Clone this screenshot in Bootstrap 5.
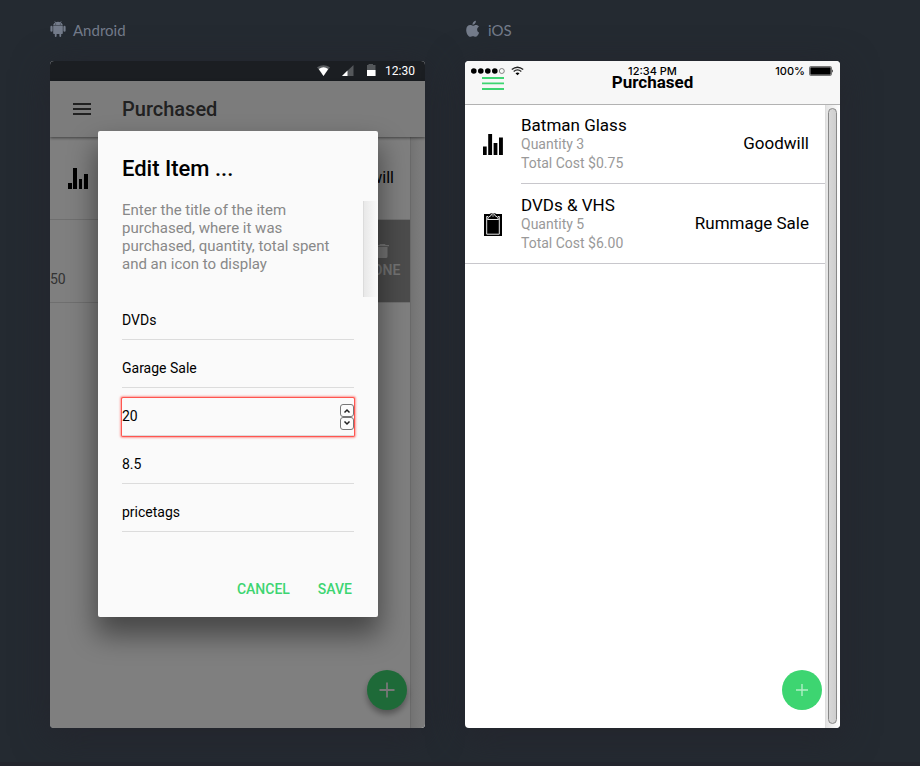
<!DOCTYPE html>
<html lang="en">
<head>
<meta charset="utf-8">
<meta name="viewport" content="width=device-width, initial-scale=1">
<title>Purchased</title>
<link href="https://cdn.jsdelivr.net/npm/bootstrap@5.3.0/dist/css/bootstrap.min.css" rel="stylesheet">
<style>
  body { background: #242a31; font-family: Roboto, "Liberation Sans", sans-serif; color: #000; border-bottom: 4px solid #23252d; }
  .stage { display: grid; grid-template-columns: 1fr 1fr; column-gap: 40px; padding: 20px 80px 34px 50px; }
  .platform { height: 21px; margin-bottom: 20px; gap: 7px; color: #747c8b; font: 15px/21px Lato, sans-serif; }
  .platform svg { display: block; margin-top: -4px; }
  .phone { min-height: calc(100vh - 99px); border-radius: 4px; box-shadow: 0 8px 36px #24252d; }
  button { font-family: inherit; }

  /* Android */
  .md-status { height: 20px; background: #1b1e22; color: #fff; font-size: 12px; line-height: 20px; padding-right: 10px; }
  .md-bar { height: 56px; background: #f9f9f9; padding-left: 20px; box-shadow: 0 1px 3px rgba(0,0,0,.5); z-index: 1; }
  .md-bar h1 { font-size: 20px; line-height: 24px; font-weight: 500; color: #424242; margin: 0 0 0 28px; }
  .icon-btn { border: 0; background: none; padding: 0; display: block; }
  .md-track { width: 15px; border-left: 1px solid #d5d5d5; background: linear-gradient(90deg, #e6e6e6, #fafafa 80%); }
  .md-row { height: 83px; border-bottom: 1px solid #dedede; font-size: 16px; }
  .md-cost { color: #666; font-size: 14px; line-height: 16px; padding-bottom: 15px; }
  .md-done { width: 56px; border: 0; background: #999; color: #e8e8e8; font-size: 14px; line-height: 17px; font-weight: 500; }
  .fab { position: absolute; right: 18px; bottom: 18px; width: 40px; height: 40px; border: 0; border-radius: 50%; padding: 0; background: #3dd571; }
  .md-fab { box-shadow: 0 4px 6px rgba(0,0,0,.35); }
  .scrim { inset: 0; top: 20px; background: rgba(0,0,0,.5); padding: 50px 0 0 1px; z-index: 2; }
  .dialog { width: 280px; background: #fafafa; border-radius: 2px; box-shadow: 0 16px 28px 2px rgba(0,0,0,.45); padding-bottom: 10px; }
  .dialog h2 { font-size: 22px; line-height: 26px; font-weight: 500; margin: 0; padding: 25px 24px 19px; }
  .message { height: 96px; font-size: 15px; line-height: 18px; color: #888; }
  .message p { margin: 0; padding: 0 20px 0 24px; flex: 1; }
  .msg-track { width: 15px; border-left: 1px solid #dcdcdc; background: linear-gradient(90deg, #e8e8e8, #fafafa); }
  .fields { padding: 5px 24px 0; display: grid; row-gap: 10px; }
  .field { height: 38px; border: 0; border-bottom: 1px solid #dcdcdc; border-radius: 0; padding: 0 0 2px; background: none; font-size: 14px; line-height: 18px; color: #000; width: 100%; outline: 0; appearance: textfield; }
  .field::-webkit-inner-spin-button { display: none; }
  .active-field { border-radius: 1px; box-shadow: 0 0 0 1px #ff5650, 0 0 2px 2px rgba(255,86,80,.55); }
  .spin { border: 1px solid #777; border-radius: 3px; background: #fcfcfc; width: 14px; height: 13px; padding: 0; display: flex; align-items: center; justify-content: center; }
  .actions { padding: 39px 18px 0; gap: 12px; }
  .actions button { border: 0; background: none; padding: 0 8px; height: 36px; font-size: 14px; font-weight: 500; color: #3dd571; }

  /* iOS */
  .ios { background: #fff; }
  .ios-bar { background: #f7f7f7; height: 44px; border-bottom: 1px solid #b2b2b2; display: grid; grid-template-columns: 1fr auto 1fr; align-items: center; padding: 0 17px; }
  .ios-bar h1 { font-size: 17px; line-height: 20px; font-weight: 700; margin: 0; padding-bottom: 2px; }
  .ios-status { inset: 0 0 auto 0; height: 20px; display: grid; grid-template-columns: 1fr auto 1fr; align-items: center; padding: 0 6px; font: 500 11px/20px Inter, sans-serif; }
  .ios-row { padding-left: 17px; height: 80px; }
  .ios-row:first-child { height: 79px; }
  .ios-row > svg { flex: none; width: 22px; }
  .ios-body { margin-left: 17px; border-bottom: 1px solid #c8c7cc; padding: 11px 16px 0 0; }
  .ios-row + .ios-row { border-bottom: 1px solid #c8c7cc; }
  .ios-row + .ios-row .ios-body { border: 0; padding-top: 12px; }
  .ios-body h2, .vendor { font-size: 17px; line-height: 19px; font-weight: 400; margin: 0; }
  .ios-body p { font-size: 14px; line-height: 19px; margin: 0; color: #999; }
  .vendor { padding-top: 18px; }
  .ios-track { width: 15px; padding: 3px 3px 4px 2px; border-left: 1px solid #ddd; background: linear-gradient(90deg, #e4e4e4, #fff); }
  .ios-thumb { height: 100%; border: 1px solid #888; border-radius: 5px; background: linear-gradient(90deg, #d8d8d8, #cecece); }
</style>
<script src="https://cdn.jsdelivr.net/npm/bootstrap@5.3.0/dist/js/bootstrap.bundle.min.js"></script>
</head>
<body>
<main class="stage">
  <section>
    <div class="platform d-flex align-items-center">
      <svg width="16" height="16" viewBox="0 0 16 16" fill="currentColor"><path fill-rule="evenodd" d="M3.200 4.500C3.300 3 4.100 2 5.200 1.400L4.500.4l.4-.3.800 1.100a6 6 0 0 1 4.600 0L11.100.1l.4.3-.7 1c1.100.6 1.900 1.600 2 3.100zM5.700 2.500a.5.500 0 1 0 0 1 .5.500 0 0 0 0-1zm4.600 0a.5.500 0 1 0 0 1 .5.500 0 0 0 0-1z"/><path d="M3.200 5h9.600v7.300q0 .7-.7.700h-.9v2.100a.9.900 0 0 1-1.800 0V13H6.600v2.100a.9.900 0 0 1-1.800 0V13h-.9q-.7 0-.7-.7z"/><rect x=".4" y="4.800" width="2.200" height="6" rx="1.100"/><rect x="13.400" y="4.800" width="2.200" height="6" rx="1.100"/></svg>
      <span>Android</span>
    </div>
    <div class="phone position-relative overflow-hidden d-flex flex-column bg-white">
      <div class="md-status d-flex justify-content-end align-items-center">
        <svg width="60" height="14" viewBox="0 0 60 14" class="me-2"><path d="M0 3.300Q6.500-1 13 3.300L6.500 12z" fill="#5a5d60"/><path d="M1.800 5Q6.500 1.700 11.200 5L6.500 12z" fill="#fff"/><path d="M25 12L36.500 1v11z" fill="#54575a"/><path d="M25 12l5.500-5.400V12z" fill="#fff"/><path d="M50 1h1.500V0h4.500v1h2.500v11H50z" fill="#54575a"/><path d="M50 6h8.500v6H50z" fill="#fff"/></svg>
        <span>12:30</span>
      </div>
      <header class="md-bar d-flex align-items-center position-relative">
        <button class="icon-btn" type="button" aria-label="Menu"><svg width="24" height="24" viewBox="0 0 24 24" class="d-block"><path d="M3 7h18M3 12h18M3 17h18" stroke="#424242" stroke-width="2"/></svg></button>
        <h1>Purchased</h1>
      </header>
      <div class="d-flex flex-grow-1">
        <div class="flex-grow-1">
          <div class="md-row d-flex justify-content-between align-items-center px-3">
            <svg width="24" height="24" viewBox="0 0 24 24" class="d-block"><path d="M2 17h4v6H2zM7 2h4v21H7zM13 13h3v10h-3zM18 8h4v15h-4z"/></svg>
            <span>Goodwill</span>
          </div>
          <div class="md-row d-flex justify-content-between">
            <span class="md-cost align-self-end">50</span>
            <button class="md-done" type="button"><svg width="13" height="15" viewBox="0 0 13 15" class="d-block mx-auto mb-1" fill="currentColor"><path d="M0 2h3.200l1-1h4.600l1 1H13v1.200H0zM1.500 4h10v9.500q0 1.500-1.500 1.500H3q-1.500 0-1.500-1.500z"/></svg>DONE</button>
          </div>
        </div>
        <div class="md-track"></div>
      </div>
      <button class="fab md-fab" type="button" aria-label="Add item"><svg width="40" height="40" viewBox="0 0 40 40" class="d-block"><path d="M12.500 20h15M20 12.500v15" stroke="#eee" stroke-width="1.800"/></svg></button>
      <div class="scrim position-absolute d-flex justify-content-center align-items-start">
        <form class="dialog" role="dialog" aria-labelledby="edit-title">
          <h2 id="edit-title">Edit Item ...</h2>
          <div class="message d-flex"><p>Enter the title of the item purchased, where it was purchased, quantity, total spent and an icon to display</p><div class="msg-track"></div></div>
          <div class="fields">
            <input class="field" type="text" aria-label="Title" value="DVDs">
            <input class="field" type="text" aria-label="Purchased at" value="Garage Sale">
            <div class="d-flex position-relative">
              <input class="field active-field" type="number" aria-label="Quantity" value="20">
              <div class="position-absolute top-50 end-0 translate-middle-y">
                <button class="spin" type="button" aria-label="Increase"><svg width="8" height="6" viewBox="0 0 8 6" fill="none" stroke="#222" stroke-width="1.500"><path d="M1.500 4.500L4 2l2.500 2.500"/></svg></button>
                <button class="spin" type="button" aria-label="Decrease"><svg width="8" height="6" viewBox="0 0 8 6" fill="none" stroke="#222" stroke-width="1.500"><path d="M1.500 .5L4 3 6.500 .5"/></svg></button>
              </div>
            </div>
            <input class="field" type="text" aria-label="Total cost" value="8.5">
            <input class="field" type="text" aria-label="Icon" value="pricetags">
          </div>
          <div class="actions d-flex justify-content-end"><button type="button">CANCEL</button><button type="button">SAVE</button></div>
        </form>
      </div>
    </div>
  </section>

  <section>
    <div class="platform d-flex align-items-center">
      <svg width="16" height="18" viewBox="0 0 16 18" fill="currentColor"><path d="M10.900.7c.1 1.200-.4 2.200-1.100 3-.7.700-1.500 1.100-2.300 1-.1-1.100.4-2.100 1-2.800.7-.7 1.600-1.200 2.400-1.200z"/><path d="M14.100 12.700c-.7 1.900-2.100 4.100-3.600 4.100-1 0-1.400-.6-2.600-.6s-1.700.6-2.600.6C3.300 16.800 1.200 13.500 1.200 10c0-3.100 1.900-4.900 4-4.900 1.100 0 2 .7 2.700.7.800 0 1.800-.8 3.200-.8 1.100 0 2.200.6 2.900 1.600-2.700 1.600-2.300 5 .1 6.100z"/></svg>
      <span>iOS</span>
    </div>
    <div class="phone ios position-relative overflow-hidden d-flex flex-column">
      <header class="ios-bar">
        <button class="icon-btn" type="button" aria-label="Menu"><svg width="22" height="14" viewBox="0 0 22 14" class="d-block"><path d="M0 2h22M0 7.300h22M0 13h22" stroke="#3dd571" stroke-width="1.800"/></svg></button>
        <h1>Purchased</h1><span></span>
      </header>
      <div class="ios-status position-absolute">
        <svg width="54" height="12" viewBox="0 0 54 12" class="d-block"><circle cx="2.800" cy="6" r="2.800"/><circle cx="9.800" cy="6" r="2.800"/><circle cx="16.800" cy="6" r="2.800"/><circle cx="23.800" cy="6" r="2.800"/><circle cx="30.800" cy="6" r="2.500" fill="none" stroke="#555" stroke-width=".7"/><path d="M40.800 4.600q5.700-4.700 11.400 0M42.700 6.500q3.800-3.200 7.600 0" fill="none" stroke="#222" stroke-width="1.300"/><path d="M44.500 8.200q2-1.600 4 0l-2 2z"/></svg>
        <span>12:34 PM</span>
        <span class="d-flex justify-content-end align-items-center gap-1">100% <svg width="25" height="10" viewBox="0 0 25 10"><rect x=".5" y=".5" width="22" height="9" rx="1.200" fill="#fff" stroke="#555" stroke-width=".8"/><rect x="1.300" y="1.300" width="20.400" height="7.400"/><path d="M23.200 3.200q1.600 1.800 0 3.600z"/></svg></span>
      </div>
      <div class="d-flex flex-grow-1">
        <div class="flex-grow-1">
          <article class="ios-row d-flex align-items-stretch">
            <svg width="22" height="79" viewBox="0 0 22 79"><path d="M1 41.500h3.700V50H1zM6.200 29h3.900v21H6.200zM11.600 38h3.800v12h-3.800zM17 32.500h3.900V50H17z"/></svg>
            <div class="ios-body d-flex flex-grow-1 justify-content-between"><div><h2>Batman Glass</h2><p>Quantity 3</p><p>Total Cost $0.75</p></div><div class="vendor">Goodwill</div></div>
          </article>
          <article class="ios-row d-flex align-items-stretch">
            <svg width="22" height="79" viewBox="0 0 22 79"><path d="M2 30h5.500L9 29.300h4l1.500.7H20v22H2z"/><path d="M6 32.500H4.700v17.700h12.600V32.500H16" fill="none" stroke="#fff" stroke-width=".9"/><path d="M5.500 35.500q.2-3 3.200-3.500.3-2.200 2.300-2.200t2.300 2.200q3 .5 3.200 3.500z" fill="#000" stroke="#fff" stroke-width=".9"/><circle cx="11" cy="31.900" r=".7" fill="#fff"/></svg>
            <div class="ios-body d-flex flex-grow-1 justify-content-between"><div><h2>DVDs &amp; VHS</h2><p>Quantity 5</p><p>Total Cost $6.00</p></div><div class="vendor">Rummage Sale</div></div>
          </article>
        </div>
        <div class="ios-track"><div class="ios-thumb"></div></div>
      </div>
      <button class="fab" type="button" aria-label="Add item"><svg width="40" height="40" viewBox="0 0 40 40" class="d-block"><path d="M14 20h12M20 14v12" stroke="#b1eec6" stroke-width="1.400"/></svg></button>
    </div>
  </section>
</main>
</body>
</html>
